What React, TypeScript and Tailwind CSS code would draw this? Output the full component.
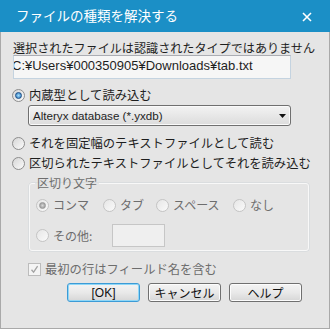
import React from 'react';

const jp = "font-['Noto_Sans_CJK_JP',sans-serif]";
const latin = "font-['Liberation_Sans','Noto_Sans_CJK_JP',sans-serif]";

function Radio({ checked = false, disabled = false }: { checked?: boolean; disabled?: boolean }) {
  const ring = disabled
    ? 'border-[#c4c4c4] bg-linear-to-br from-[#e6e6e6] to-[#fafafa]'
    : 'border-[#8d8d8d] bg-linear-to-br from-[#d6d6d6] to-[#fbfbfb]';
  return (
    <span className={`flex w-[13px] h-[13px] shrink-0 items-center justify-center rounded-full border ${ring}`}>
      {checked && (
        <span
          className={`w-[7px] h-[7px] rounded-full border ${
            disabled
              ? 'border-[#9a9a9a] bg-radial from-[#d8d8d8] to-[#8c8c8c]'
              : 'border-[#1d4f86] bg-radial from-[#a6e0fb] to-[#1f6fb8]'
          }`}
        />
      )}
    </span>
  );
}

function Btn({ label, primary = false, className = '' }: { label: string; primary?: boolean; className?: string }) {
  return (
    <button
      className={`h-[19px] w-[73px] rounded-[3px] border text-[12px] leading-none text-[#111] bg-linear-to-b from-[#f4f4f4] via-[#e9e9e9] to-[#d6d6d6] ${
        primary
          ? 'border-[#3c9bd6] shadow-[inset_0_0_0_1px_#8fd7f7]'
          : 'border-[#707070] shadow-[inset_0_0_0_1px_#fcfcfc]'
      } ${className}`}
    >
      {label}
    </button>
  );
}

export default function App() {
  return (
    <div className={`w-[330px] h-[329px] flex flex-col text-[#1e1e1e] ${jp}`}>
      <div className="h-[32px] shrink-0 bg-[#1b8fc6] flex items-center justify-between pl-[16px] pr-[18px]">
        <span className="text-white text-[13.5px] leading-none">ファイルの種類を解決する</span>
        <svg width="10" height="10" viewBox="0 0 10 10" className="mt-px">
          <path d="M1 1 L9 9 M9 1 L1 9" stroke="white" strokeWidth="1.6" />
        </svg>
      </div>

      <div className="flex-1 flex flex-col bg-[#e5e5e5] border-x border-b border-[#a9a9a9] pl-[12px]">
        <div className="mt-[8px] text-[12.1px] leading-[15px] whitespace-nowrap">
          選択されたファイルは認識されたタイプではありません
        </div>

        <div className="h-[24px] w-[278px] border border-[#c4d3e0] border-t-[#abadb3] bg-[#f6f6f6] overflow-hidden pt-[2px]">
          <div className={`${latin} text-[13px] leading-[15px] -ml-[2px] whitespace-nowrap`}>
            C:¥Users¥000350905¥Downloads¥tab.txt
          </div>
        </div>

        <div className="mt-[8px] h-[16px] flex items-center gap-[4px] -ml-px">
          <Radio checked />
          <span className="text-[12.3px] leading-none">内蔵型として読み込む</span>
        </div>

        <div className="mt-[2px] ml-[15px] h-[21px] w-[263px] rounded-[3px] border border-[#707070] bg-linear-to-b from-[#f3f3f3] to-[#dcdcdc] shadow-[inset_0_0_0_1px_#fafafa] flex items-center justify-between pl-[4px] pr-[4px]">
          <span className={`${latin} text-[11.6px] leading-none`}>Alteryx database (*.yxdb)</span>
          <svg width="7" height="4" viewBox="0 0 7 4">
            <path d="M0 0 H7 L3.5 4 Z" fill="#111" />
          </svg>
        </div>

        <div className="mt-[9px] h-[16px] flex items-center gap-[4px] -ml-px">
          <Radio />
          <span className="text-[12.3px] leading-none">それを固定幅のテキストファイルとして読む</span>
        </div>

        <div className="mt-[4px] h-[16px] flex items-center gap-[4px] -ml-px">
          <Radio />
          <span className="text-[12.3px] leading-none whitespace-nowrap">区切られたテキストファイルとしてそれを読み込む</span>
        </div>

        <fieldset className="mt-[5px] ml-[16px] w-[280px] rounded-[3px] border border-[#f8f8f8] shadow-[0_0_0_0.5px_#d0d6da] pb-[3px] text-[#6d6d6d]">
          <legend className="ml-[5px] px-[2px] text-[12px] leading-[14px]">区切り文字</legend>
          <div className="mt-[7px] h-[16px] flex items-center pl-[6px] text-[12px]">
            <div className="w-[67px] flex items-center gap-[4px]">
              <Radio checked disabled />
              <span>コンマ</span>
            </div>
            <div className="w-[53px] flex items-center gap-[4px]">
              <Radio disabled />
              <span>タブ</span>
            </div>
            <div className="w-[77px] flex items-center gap-[4px]">
              <Radio disabled />
              <span>スペース</span>
            </div>
            <div className="flex items-center gap-[4px]">
              <Radio disabled />
              <span>なし</span>
            </div>
          </div>
          <div className="mt-[11px] flex items-center pl-[6px] text-[12px]">
            <div className="w-[76px] flex items-center gap-[4px]">
              <Radio disabled />
              <span>その他:</span>
            </div>
            <div className="h-[23px] w-[53px] border border-[#c6c6c6] bg-[#efefef]" />
          </div>
        </fieldset>

        <div className="mt-[10px] ml-[15px] h-[16px] flex items-center gap-[4px]">
          <span className="w-[13px] h-[13px] border border-[#bcbcbc] bg-[#f4f4f4] flex items-center justify-center">
            <svg width="9" height="9" viewBox="0 0 9 9">
              <path d="M1.5 4.8 L3.6 7.2 L7.6 1.2" stroke="#a3a3a3" strokeWidth="1.3" fill="none" />
            </svg>
          </span>
          <span className="text-[12.3px] leading-none text-[#6d6d6d]">最初の行はフィールド名を含む</span>
        </div>

        <div className="mt-[6px] ml-[54px] flex gap-[8px]">
          <Btn label="[OK]" primary className={latin} />
          <Btn label="キャンセル" />
          <Btn label="ヘルプ" />
        </div>
      </div>
    </div>
  );
}
